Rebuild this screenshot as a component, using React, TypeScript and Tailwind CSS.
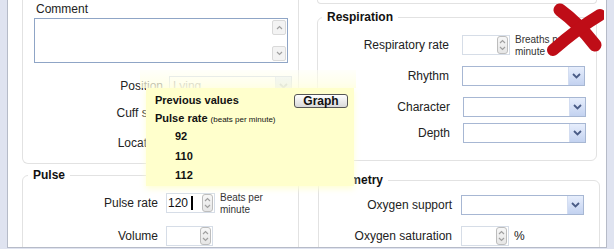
import React from "react";

const fieldBorder = "border-[#e2e2e2]";
const labelClass = "text-right text-[12px] leading-[14px] text-[#222] shrink-0";

function Chevron({ up = false }: { up?: boolean }) {
  return (
    <svg width="7" height="5" viewBox="0 0 7 5" className="block">
      <path d={up ? "M1 4 L3.5 1.5 L6 4" : "M1 1 L3.5 3.5 L6 1"} fill="none" stroke="#a0a0a0" strokeWidth="1.2" />
    </svg>
  );
}

function Spinner() {
  return (
    <div className="w-[11px] h-[18px] my-auto mr-[1px] rounded-[3px] border border-[#bdbdbd] bg-gradient-to-b from-[#f7f7f7] to-[#e6e6e6] flex flex-col items-center justify-between py-[2px]">
      <Chevron up />
      <Chevron />
    </div>
  );
}

function NumberInput({ width, value, cursor }: { width: string; value?: string; cursor?: boolean }) {
  return (
    <div className={`${width} h-[20px] border border-[#d6dde7] bg-white flex shrink-0`}>
      <div className="flex-1 flex items-center pl-[1px] text-[12px] text-[#111]">
        {value}
        {cursor && <span className="ml-[3px] w-[2px] h-[14px] bg-black" />}
      </div>
      <Spinner />
    </div>
  );
}

function Select({ value, faded }: { value?: string; faded?: boolean }) {
  return (
    <div className={`w-[123px] h-[20px] border ${faded ? "border-[#c9d3e4]" : "border-[#a7b7d3]"} bg-white flex shrink-0`}>
      <div className={`flex-1 flex items-center px-[3px] text-[12px] ${faded ? "text-[#8a8a8a]" : "text-[#222]"}`}>{value}</div>
      <div className="w-[16px] h-full bg-gradient-to-b from-[#e7eefc] to-[#c3d2f0] border-l border-[#d3ddf1] flex items-center justify-center">
        <svg width="9" height="6" viewBox="0 0 9 6">
          <path d="M1 1 L4.5 4.5 L8 1" fill="none" stroke={faded ? "#9aa6bf" : "#4a5c86"} strokeWidth="1.8" />
        </svg>
      </div>
    </div>
  );
}

function Unit({ lines }: { lines: string[] }) {
  return (
    <div className="ml-[5px] text-[10px] leading-[12px] text-[#333] -mt-[1px] whitespace-nowrap">
      {lines.map((l) => (
        <div key={l}>{l}</div>
      ))}
    </div>
  );
}

function RedCross() {
  return (
    <svg width="66" height="56" viewBox="0 0 66 56" className="absolute left-[538px] top-[1px]">
      <path d="M22 9 Q 40 22 57 44" fill="none" stroke="#bf0d17" strokeWidth="13" strokeLinecap="round" />
      <path d="M62 14 Q 40 27 15 49" fill="none" stroke="#bf0d17" strokeWidth="12" strokeLinecap="round" />
    </svg>
  );
}

function PreviousValues() {
  return (
    <>
      {/* fade over the row just above the popup */}
      <div className="absolute left-[140px] top-[70px] w-[216px] h-[18px] bg-gradient-to-b from-[rgba(255,255,245,0.45)] to-[rgba(255,255,225,0.8)]" />
      <div className="absolute left-[146px] top-[88px] w-[208px] h-[98px] bg-[#ffffcc] shadow-[0_3px_6px_0_rgba(255,255,210,0.9)] pl-[9px] pr-[6px] pt-[5px]">
        <div className="flex justify-between items-start">
          <span className="text-[11px] font-bold leading-[14px] text-[#111]">Previous values</span>
          <button className="w-[54px] h-[14px] mt-[1px] rounded-[3px] border border-[#555] bg-gradient-to-b from-white to-[#d9d9d9] text-[12px] font-bold leading-[12px] text-[#111]">
            Graph
          </button>
        </div>
        <div className="mt-[2px] leading-[14px] text-[#111]">
          <span className="text-[11px] font-bold">Pulse rate</span>
          <span className="text-[8px] ml-[3px]">(beats per minute)</span>
        </div>
        <div className="pl-[20px] text-[11px] font-bold leading-[19.5px] text-[#111]">
          <div>92</div>
          <div>110</div>
          <div>112</div>
        </div>
      </div>
    </>
  );
}

export default function App() {
  return (
    <div className="relative w-[614px] h-[249px] overflow-hidden bg-[#dfe3f0] font-['Liberation_Sans',Arial,sans-serif] text-[#222]">
      <div className="mx-[7px] h-[248px] border-x border-b border-[#b6bbc8] bg-white flex pl-[14px] gap-[18px] overflow-hidden">
        {/* left column */}
        <div className="w-[277px] shrink-0">
          <div className={`h-[164px] border-x border-b ${fieldBorder} rounded-b-[6px]`}>
            <div className="pl-[13px] pt-[2px] text-[12px] leading-[14px]">Comment</div>
            <div className="ml-[11px] mt-[2px] w-[254px] h-[45px] border border-[#8fa5c6] bg-white flex justify-end">
              <div className="w-[15px] h-full flex flex-col justify-between py-[1px] pr-[1px]">
                <div className="h-[15px] rounded-[2px] border border-[#d9d9d9] bg-[#f3f3f3] flex items-center justify-center">
                  <Chevron up />
                </div>
                <div className="h-[15px] rounded-[2px] border border-[#d9d9d9] bg-[#f3f3f3] flex items-center justify-center">
                  <Chevron />
                </div>
              </div>
            </div>
            <div className="mt-[13px] flex items-center">
              <div className={`${labelClass} w-[140px]`}>Position</div>
              <div className="ml-[6px]"><Select value="Lying" faded /></div>
            </div>
            <div className="mt-[7px] flex items-center">
              <div className={`${labelClass} w-[140px]`}>Cuff size</div>
              <div className="ml-[6px]"><Select /></div>
            </div>
            <div className="mt-[10px] flex items-center">
              <div className={`${labelClass} w-[140px]`}>Location</div>
              <div className="ml-[6px]"><Select /></div>
            </div>
          </div>

          <fieldset className={`mt-[4px] h-[100px] border ${fieldBorder} rounded-[6px]`}>
            <legend className="ml-[5px] px-[5px] text-[12px] font-bold leading-[14px] text-[#111]">Pulse</legend>
            <div className="mt-[11px] h-[20px] flex items-start">
              <div className={`${labelClass} w-[135px] mt-[3px]`}>Pulse rate</div>
              <div className="ml-[8px]"><NumberInput width="w-[49px]" value="120" cursor /></div>
              <Unit lines={["Beats per", "minute"]} />
            </div>
            <div className="mt-[13px] flex items-center">
              <div className={`${labelClass} w-[135px]`}>Volume</div>
              <div className="ml-[8px]"><NumberInput width="w-[47px]" /></div>
            </div>
          </fieldset>
        </div>

        {/* right column */}
        <div className="w-[280px] shrink-0">
          <div className={`h-[4px] border-x border-b ${fieldBorder} rounded-b-[6px]`} />

          <fieldset className={`mt-[6px] h-[151px] border ${fieldBorder} rounded-[6px]`}>
            <legend className="ml-[4px] px-[5px] text-[12px] font-bold leading-[14px] text-[#111]">Respiration</legend>
            <div className="mt-[11px] h-[20px] flex items-start">
              <div className={`${labelClass} w-[131px] mt-[3px]`}>Respiratory rate</div>
              <div className="ml-[13px]"><NumberInput width="w-[48px]" /></div>
              <Unit lines={["Breaths per", "minute"]} />
            </div>
            <div className="mt-[11px] flex items-center">
              <div className={`${labelClass} w-[131px]`}>Rhythm</div>
              <div className="ml-[13px]"><Select /></div>
            </div>
            <div className="mt-[11px] flex items-center">
              <div className={`${labelClass} w-[132px]`}>Character</div>
              <div className="ml-[13px]"><Select /></div>
            </div>
            <div className="mt-[6px] flex items-center">
              <div className={`${labelClass} w-[132px]`}>Depth</div>
              <div className="ml-[13px]"><Select /></div>
            </div>
          </fieldset>

          <fieldset className={`mt-[12px] ml-[1px] w-[282px] h-[100px] border ${fieldBorder} rounded-[6px]`}>
            <legend className="ml-[7px] px-[5px] text-[12px] font-bold leading-[14px] text-[#111]">Oximetry</legend>
            <div className="mt-[8px] flex items-center">
              <div className={`${labelClass} w-[133px]`}>Oxygen support</div>
              <div className="ml-[9px]"><Select /></div>
            </div>
            <div className="mt-[11px] flex items-center">
              <div className={`${labelClass} w-[133px]`}>Oxygen saturation</div>
              <div className="ml-[9px]"><NumberInput width="w-[48px]" /></div>
              <span className="ml-[5px] text-[12px]">%</span>
            </div>
          </fieldset>
        </div>
      </div>

      <PreviousValues />
      <RedCross />
    </div>
  );
}
